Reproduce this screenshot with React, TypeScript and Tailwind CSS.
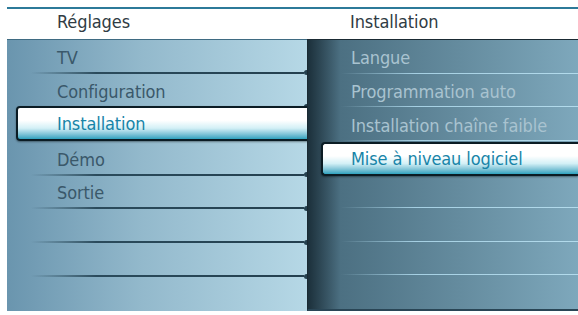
const font = { fontFamily: '"DejaVu Sans Condensed", "DejaVu Sans", sans-serif' };

const leftItems = ["TV", "Configuration", "Installation", "Démo", "Sortie", "", "", ""];
const rightItems = ["Langue", "Programmation auto", "Installation chaîne faible", "Mise à niveau logiciel", "", "", "", ""];

function LeftRow({ label, active, last }: { label: string; active: boolean; last: boolean }) {
  if (active) {
    return (
      <div className="h-[34px] flex items-stretch">
        <div className="flex-1 ml-[9px] -mr-[4px] -mt-[2px] mb-[1px] rounded-[4px] border-2 border-[#0b1c24] bg-linear-to-b from-white from-40% via-[#d3f0f6] via-65% to-[#2aa2be] flex items-center pl-[39px] text-[#1784a8] shadow-[0_1px_2px_rgba(0,0,0,0.4)]">
          {label}
        </div>
      </div>
    );
  }
  return (
    <div className="h-[34px] flex flex-col">
      <div className="flex-1 flex items-center pl-[50px] pt-[3px] text-[#3a586a]">{label}</div>
      {!last && (
        <div className="h-[2px] flex items-center">
          <div className="flex-1 h-[2px] bg-linear-to-r from-transparent from-[8%] via-[#2b4b5c] via-[30%] to-[#24404f]" />
          <div className="w-[5px] h-[5px] rounded-full bg-[#24404f] -mr-[2px]" />
        </div>
      )}
    </div>
  );
}

function RightRow({ label, active, last }: { label: string; active: boolean; last: boolean }) {
  if (active) {
    return (
      <div className="h-[34px] flex items-stretch">
        <div className="flex-1 ml-[13px] mt-[1px] -mb-[1px] rounded-l-[4px] border-2 border-r-0 border-[#0b1c24] bg-linear-to-b from-white from-40% via-[#d3f0f6] via-65% to-[#2aa2be] flex items-center pl-[28px] text-[#1784a8] shadow-[0_1px_2px_rgba(0,0,0,0.4)]">
          {label}
        </div>
      </div>
    );
  }
  return (
    <div className="h-[34px] flex flex-col">
      <div className="flex-1 flex items-center pl-[43px] pt-[3px] text-[#a9c3d0]">{label}</div>
      {!last && (
        <div className="h-[1px] bg-linear-to-r from-transparent from-[12%] via-[#a6d0e3] via-[40%] to-[#b3dbec]" />
      )}
    </div>
  );
}

export default function App() {
  return (
    <div className="w-[578px] h-[315px] bg-white overflow-hidden text-[18px] tracking-[-0.1px]" style={font}>
      <div className="ml-[7px] mt-[7px] h-[2px] bg-[#2c7a99]" />
      <div className="ml-[7px] h-[30px] flex items-end pb-[4px] text-[#303c44]">
        <div className="w-[300px] pl-[50px]">Réglages</div>
        <div className="flex-1 pl-[43px]">Installation</div>
      </div>
      <div className="ml-[7px] h-[272px] flex">
        <div className="w-[300px] flex flex-col border-t border-[#3f6b82] bg-linear-to-r from-[#6a95ae] via-[#93b9cc] via-[45%] to-[#b6d8e6]">
          {leftItems.map((l, i) => (
            <LeftRow key={i} label={l} active={i === 2} last={i === leftItems.length - 1} />
          ))}
        </div>
        <div className="flex-1 flex flex-col border-t border-l border-[#1a2a33] border-b-2 border-b-[#2a4656] bg-linear-to-r from-[#1c303b] via-[#4c7082] via-[12%] to-[#7ea8bc]">
          {rightItems.map((l, i) => (
            <RightRow key={i} label={l} active={i === 3} last={i === rightItems.length - 1} />
          ))}
        </div>
      </div>
    </div>
  );
}
